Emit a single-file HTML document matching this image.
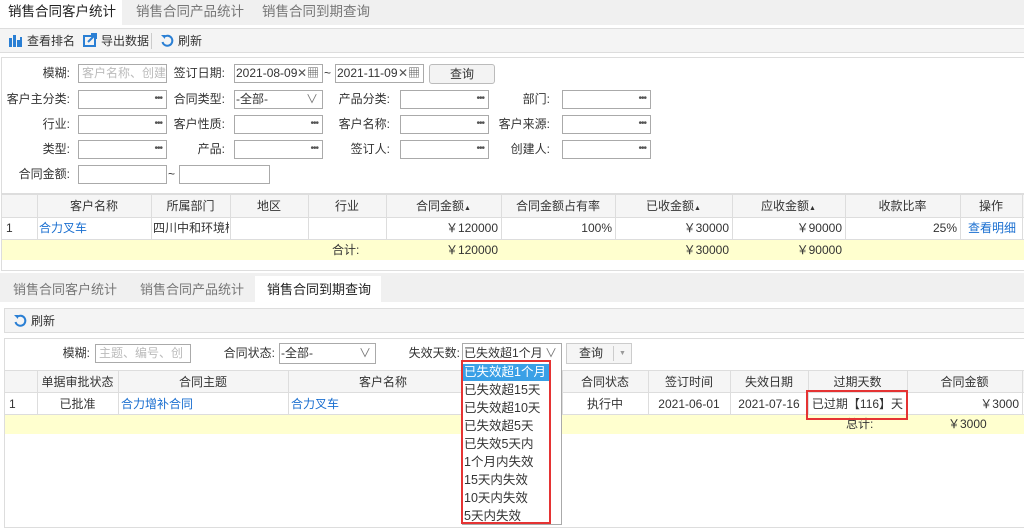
<!DOCTYPE html>
<html><head><meta charset="utf-8"><style>
*{box-sizing:border-box;margin:0;padding:0}
body{width:1024px;height:525px;overflow:hidden;background:#fff;font-family:"Liberation Sans","Noto Sans CJK SC",sans-serif;font-size:12px;color:#333;position:relative}
.a{position:absolute;white-space:nowrap}
.tab{font-size:13.5px;color:#777;line-height:24px}
.lbl{text-align:right;line-height:19px}
.in{position:absolute;height:19px;border:1px solid #aaa;background:#fff}
.dots{position:absolute;right:4px;top:2px;font-size:10px;color:#555;letter-spacing:-1px}
.vl{position:absolute;top:0;bottom:0;width:1px;background:#ddd}
.c{position:absolute;line-height:22px;text-align:center}
.blue{color:#1a6fd0}
</style></head><body>
<div class="a" style="left:0;top:0;width:1024px;height:25px;background:#f0f0f0"></div>
<div class="a tab" style="left:0;top:0;width:122px;height:25px;background:#fff;color:#222;padding-left:8px">销售合同客户统计</div>
<div class="a tab" style="left:136px;top:0">销售合同产品统计</div>
<div class="a tab" style="left:262px;top:0">销售合同到期查询</div>
<div class="a" style="left:0;top:28px;width:1024px;height:25px;background:#f4f4f4;border-top:1px solid #ddd;border-bottom:1px solid #ddd"></div>
<svg class="a" style="left:9px;top:35px" width="14" height="12"><rect x="0" y="3" width="3" height="9" fill="#2a7fd4"/><rect x="4" y="0" width="3" height="12" fill="#2a7fd4"/><rect x="8" y="5" width="3" height="7" fill="#2a7fd4"/><rect x="11" y="2" width="2" height="10" fill="#2a7fd4"/></svg>
<div class="a" style="left:27px;top:33px;line-height:16px">查看排名</div>
<svg class="a" style="left:83px;top:33px" width="14" height="14"><rect x="1" y="3" width="11" height="10" fill="none" stroke="#2a7fd4" stroke-width="2"/><path d="M5 9 L12 2 M8 1 H13 V6" stroke="#2a7fd4" stroke-width="2" fill="none"/></svg>
<div class="a" style="left:101px;top:33px;line-height:16px">导出数据</div>
<div class="a" style="left:151px;top:33px;width:1px;height:16px;background:#ccc"></div>
<svg class="a" style="left:160px;top:34px" width="14" height="14"><path d="M4 3 A5 5 0 1 1 2.5 8" fill="none" stroke="#2a7fd4" stroke-width="2"/><path d="M1 1 L5 1 L5 5 Z" fill="#2a7fd4"/></svg>
<div class="a" style="left:178px;top:33px;line-height:16px">刷新</div>
<div class="a" style="left:1px;top:57px;width:1023px;height:137px;border:1px solid #ddd;border-right:none"></div>
<div class="a lbl" style="left:0;top:64px;width:70px">模糊:</div>
<div class="in" style="left:78px;top:64px;width:89px;color:#bbb;padding-left:3px;line-height:17px;overflow:hidden">客户名称、创建人</div>
<div class="a lbl" style="left:160px;top:64px;width:65px">签订日期:</div>
<div class="in" style="left:234px;top:64px;width:89px;line-height:17px;padding-left:1px">2021-08-09<span style="position:absolute;right:3px;color:#555">✕▦</span></div>
<div class="a" style="left:324px;top:66px">~</div>
<div class="in" style="left:335px;top:64px;width:89px;line-height:17px;padding-left:1px">2021-11-09<span style="position:absolute;right:3px;color:#555">✕▦</span></div>
<div class="a" style="left:429px;top:64px;width:66px;height:20px;border:1px solid #bbb;border-radius:3px;background:#f3f3f3;text-align:center;line-height:18px">查询</div>
<div class="a lbl" style="left:0;top:90px;width:70px">客户主分类:</div>
<div class="in" style="left:78px;top:90px;width:89px"><span class="dots">•••</span></div>
<div class="a lbl" style="left:160px;top:90px;width:65px">合同类型:</div>
<div class="in" style="left:234px;top:90px;width:89px;line-height:17px;padding-left:1px">-全部-<span style="position:absolute;right:4px;color:#777">∨</span></div>
<div class="a lbl" style="left:320px;top:90px;width:70px">产品分类:</div>
<div class="in" style="left:400px;top:90px;width:89px"><span class="dots">•••</span></div>
<div class="a lbl" style="left:480px;top:90px;width:70px">部门:</div>
<div class="in" style="left:562px;top:90px;width:89px"><span class="dots">•••</span></div>
<div class="a lbl" style="left:0;top:115px;width:70px">行业:</div>
<div class="in" style="left:78px;top:115px;width:89px"><span class="dots">•••</span></div>
<div class="a lbl" style="left:160px;top:115px;width:65px">客户性质:</div>
<div class="in" style="left:234px;top:115px;width:89px"><span class="dots">•••</span></div>
<div class="a lbl" style="left:320px;top:115px;width:70px">客户名称:</div>
<div class="in" style="left:400px;top:115px;width:89px"><span class="dots">•••</span></div>
<div class="a lbl" style="left:480px;top:115px;width:70px">客户来源:</div>
<div class="in" style="left:562px;top:115px;width:89px"><span class="dots">•••</span></div>
<div class="a lbl" style="left:0;top:140px;width:70px">类型:</div>
<div class="in" style="left:78px;top:140px;width:89px"><span class="dots">•••</span></div>
<div class="a lbl" style="left:160px;top:140px;width:65px">产品:</div>
<div class="in" style="left:234px;top:140px;width:89px"><span class="dots">•••</span></div>
<div class="a lbl" style="left:320px;top:140px;width:70px">签订人:</div>
<div class="in" style="left:400px;top:140px;width:89px"><span class="dots">•••</span></div>
<div class="a lbl" style="left:480px;top:140px;width:70px">创建人:</div>
<div class="in" style="left:562px;top:140px;width:89px"><span class="dots">•••</span></div>
<div class="a lbl" style="left:0;top:165px;width:70px">合同金额:</div>
<div class="in" style="left:78px;top:165px;width:89px"></div>
<div class="a" style="left:168px;top:167px">~</div>
<div class="in" style="left:179px;top:165px;width:91px"></div>
<div class="a" style="left:1px;top:194px;width:1023px;height:77px;border:1px solid #ddd;border-right:none;overflow:hidden">
 <div class="a" style="left:0;top:0;width:1022px;height:23px;background:#f5f5f5;border-bottom:1px solid #ddd"></div>
 <div class="a" style="left:0;top:45px;width:1022px;height:20px;background:#ffffcf"></div>
 <div class="a" style="left:0;top:44px;width:1022px;height:1px;background:#ddd"></div>
 <div class="vl" style="left:35px;height:44px"></div><div class="vl" style="left:149px;height:44px"></div><div class="vl" style="left:228px;height:44px"></div><div class="vl" style="left:306px;height:44px"></div><div class="vl" style="left:384px;height:44px"></div><div class="vl" style="left:499px;height:44px"></div><div class="vl" style="left:613px;height:44px"></div><div class="vl" style="left:730px;height:44px"></div><div class="vl" style="left:843px;height:44px"></div><div class="vl" style="left:958px;height:44px"></div><div class="vl" style="left:1020px;height:44px"></div>
 <div class="c" style="left:35px;top:0;width:114px">客户名称</div>
 <div class="c" style="left:149px;top:0;width:79px">所属部门</div>
 <div class="c" style="left:228px;top:0;width:78px">地区</div>
 <div class="c" style="left:306px;top:0;width:78px">行业</div>
 <div class="c" style="left:384px;top:0;width:115px">合同金额<span style="font-size:7px">▲</span></div>
 <div class="c" style="left:499px;top:0;width:114px">合同金额占有率</div>
 <div class="c" style="left:613px;top:0;width:117px">已收金额<span style="font-size:7px">▲</span></div>
 <div class="c" style="left:730px;top:0;width:113px">应收金额<span style="font-size:7px">▲</span></div>
 <div class="c" style="left:843px;top:0;width:115px">收款比率</div>
 <div class="c" style="left:958px;top:0;width:62px">操作</div>
 <div class="a" style="left:4px;top:23px;line-height:21px">1</div>
 <div class="a blue" style="left:37px;top:23px;line-height:21px">合力叉车</div>
 <div class="a" style="left:151px;top:23px;line-height:21px;width:76px;overflow:hidden">四川中和环境检测</div>
 <div class="a" style="left:384px;top:23px;line-height:21px;width:112px;text-align:right">￥120000</div>
 <div class="a" style="left:499px;top:23px;line-height:21px;width:111px;text-align:right">100%</div>
 <div class="a" style="left:613px;top:23px;line-height:21px;width:114px;text-align:right">￥30000</div>
 <div class="a" style="left:730px;top:23px;line-height:21px;width:110px;text-align:right">￥90000</div>
 <div class="a" style="left:843px;top:23px;line-height:21px;width:112px;text-align:right">25%</div>
 <div class="a blue" style="left:960px;top:23px;line-height:21px;width:60px;text-align:center">查看明细</div>
 <div class="a" style="left:330px;top:45px;line-height:20px">合计:</div>
 <div class="a" style="left:384px;top:45px;line-height:20px;width:112px;text-align:right">￥120000</div>
 <div class="a" style="left:613px;top:45px;line-height:20px;width:114px;text-align:right">￥30000</div>
 <div class="a" style="left:730px;top:45px;line-height:20px;width:110px;text-align:right">￥90000</div>
</div>
<div class="a" style="left:0;top:273px;width:1024px;height:29px;background:#f0f0f0"></div>
<div class="a" style="left:255px;top:276px;width:126px;height:26px;background:#fff"></div>
<div class="a tab" style="left:13px;top:278px;font-size:13px">销售合同客户统计</div>
<div class="a tab" style="left:140px;top:278px;font-size:13px">销售合同产品统计</div>
<div class="a tab" style="left:267px;top:278px;font-size:13px;color:#222">销售合同到期查询</div>
<div class="a" style="left:4px;top:308px;width:1020px;height:25px;background:#f4f4f4;border:1px solid #ddd;border-right:none"></div>
<svg class="a" style="left:13px;top:314px" width="14" height="14"><path d="M4 3 A5 5 0 1 1 2.5 8" fill="none" stroke="#2a7fd4" stroke-width="2"/><path d="M1 1 L5 1 L5 5 Z" fill="#2a7fd4"/></svg>
<div class="a" style="left:31px;top:313px;line-height:16px">刷新</div>
<div class="a" style="left:4px;top:338px;width:1020px;height:190px;border:1px solid #ddd;border-right:none"></div>
<div class="a lbl" style="left:40px;top:344px;width:50px">模糊:</div>
<div class="in" style="left:95px;top:344px;width:96px;color:#bbb;padding-left:3px;line-height:17px;overflow:hidden">主题、编号、创建人</div>
<div class="a lbl" style="left:210px;top:344px;width:65px">合同状态:</div>
<div class="in" style="left:279px;top:343px;width:97px;height:21px;line-height:19px;padding-left:1px">-全部-<span style="position:absolute;right:4px;color:#777">∨</span></div>
<div class="a lbl" style="left:395px;top:344px;width:65px">失效天数:</div>
<div class="in" style="left:462px;top:343px;width:100px;height:21px;line-height:19px;padding-left:1px">已失效超1个月<span style="position:absolute;right:4px;color:#777">∨</span></div>
<div class="a" style="left:566px;top:343px;width:66px;height:21px;border:1px solid #ccc;background:#f5f5f5"><span style="position:absolute;left:12px;line-height:19px">查询</span><span style="position:absolute;left:46px;top:2px;width:1px;height:15px;background:#ccc"></span><span style="position:absolute;left:52px;line-height:19px;font-size:7px;color:#999">▼</span></div>
<div class="a" style="left:5px;top:370px;width:1019px;height:23px;background:#f5f5f5;border-top:1px solid #ddd;border-bottom:1px solid #ddd"></div>
<div class="a" style="left:5px;top:414px;width:1019px;height:20px;background:#ffffcf;border-top:1px solid #ddd"></div>
<div class="vl" style="left:37px;top:370px;height:44px;bottom:auto"></div>
<div class="vl" style="left:118px;top:370px;height:44px;bottom:auto"></div>
<div class="vl" style="left:288px;top:370px;height:44px;bottom:auto"></div>
<div class="vl" style="left:562px;top:370px;height:44px;bottom:auto"></div>
<div class="vl" style="left:648px;top:370px;height:44px;bottom:auto"></div>
<div class="vl" style="left:730px;top:370px;height:44px;bottom:auto"></div>
<div class="vl" style="left:808px;top:370px;height:44px;bottom:auto"></div>
<div class="vl" style="left:907px;top:370px;height:44px;bottom:auto"></div>
<div class="vl" style="left:1022px;top:370px;height:44px;bottom:auto"></div>
<div class="c" style="left:37px;top:371px;width:81px">单据审批状态</div>
<div class="c" style="left:118px;top:371px;width:170px">合同主题</div>
<div class="c" style="left:288px;top:371px;width:190px">客户名称</div>
<div class="c" style="left:562px;top:371px;width:86px">合同状态</div>
<div class="c" style="left:648px;top:371px;width:82px">签订时间</div>
<div class="c" style="left:730px;top:371px;width:78px">失效日期</div>
<div class="c" style="left:808px;top:371px;width:99px">过期天数</div>
<div class="c" style="left:907px;top:371px;width:115px">合同金额</div>
<div class="a" style="left:9px;top:394px;line-height:21px">1</div>
<div class="c" style="left:37px;top:394px;width:81px;line-height:21px">已批准</div>
<div class="a blue" style="left:121px;top:394px;line-height:21px">合力增补合同</div>
<div class="a blue" style="left:291px;top:394px;line-height:21px">合力叉车</div>
<div class="c" style="left:562px;top:394px;width:86px;line-height:21px">执行中</div>
<div class="c" style="left:648px;top:394px;width:82px;line-height:21px">2021-06-01</div>
<div class="c" style="left:730px;top:394px;width:78px;line-height:21px">2021-07-16</div>
<div class="c" style="left:808px;top:394px;width:99px;line-height:21px">已过期【116】天</div>
<div class="a" style="left:907px;top:394px;width:112px;line-height:21px;text-align:right">￥3000</div>
<div class="a" style="left:846px;top:414px;line-height:20px">总计:</div>
<div class="a" style="left:948px;top:414px;line-height:20px">￥3000</div>
<div class="a" style="left:806px;top:390px;width:102px;height:30px;border:2px solid #e53333"></div>
<div class="a" style="left:462px;top:363px;width:100px;height:162px;background:#fff;border:1px solid #aaa;border-top:none"></div>
<div class="a" style="left:463px;top:364px;width:87px;height:17px;background:#3aa0e6"></div>
<div class="a" style="left:464px;top:363px;line-height:18px;font-size:12.5px">
<div style="color:#fff">已失效超1个月</div><div>已失效超15天</div><div>已失效超10天</div><div>已失效超5天</div><div>已失效5天内</div><div>1个月内失效</div><div>15天内失效</div><div>10天内失效</div><div>5天内失效</div></div>
<div class="a" style="left:461px;top:360px;width:90px;height:164px;border:2px solid #e53333"></div>
</body></html>
